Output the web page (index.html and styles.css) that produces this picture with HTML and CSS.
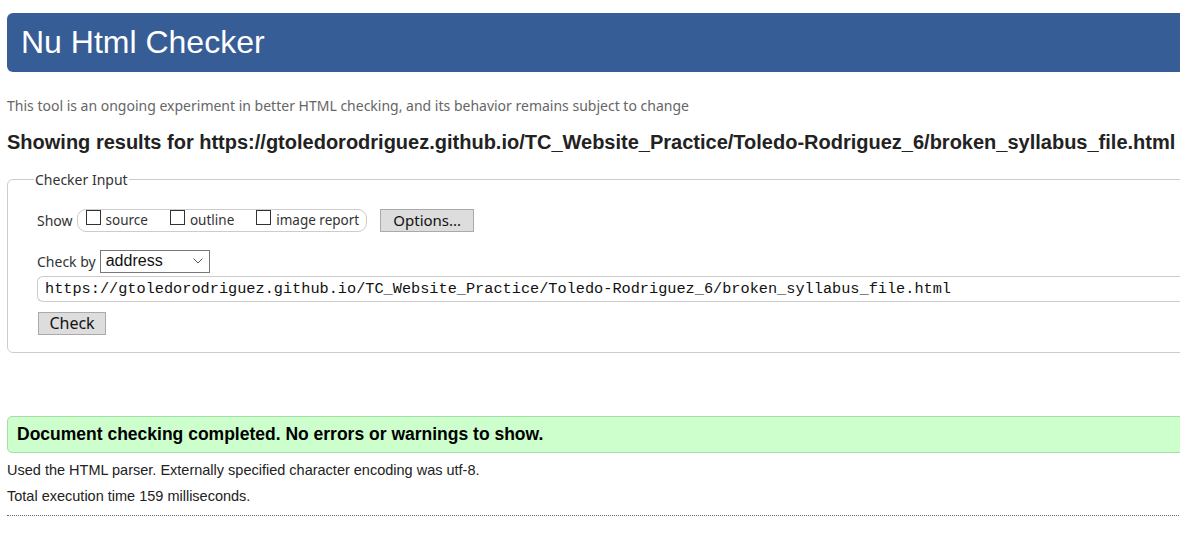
FILE: index.html
```html
<!DOCTYPE html>
<html lang="en">
<head>
<meta charset="utf-8">
<title>Nu Html Checker</title>
<link rel="stylesheet" href="styles.css">
</head>
<body>
<div class="page">
  <h1 class="banner">Nu Html Checker</h1>
  <p class="tagline">This tool is an ongoing experiment in better HTML checking, and its behavior remains subject to change</p>
  <h2 class="results-title">Showing results for https://gtoledorodriguez.github.io/TC_Website_Practice/Toledo-Rodriguez_6/broken_syllabus_file.html</h2>
  <fieldset class="checker">
    <legend class="legend">Checker Input</legend>
    <div class="row show-row">
      <span class="label">Show</span>
      <span class="pill">
        <label class="opt"><span class="box"></span>source</label>
        <label class="opt"><span class="box"></span>outline</label>
        <label class="opt"><span class="box"></span>image report</label>
      </span>
      <span class="btn options">Options...</span>
    </div>
    <div class="row by-row">
      <span class="label">Check by</span>
      <span class="select">address
        <svg class="chev" width="10" height="6" viewBox="0 0 10 6"><path d="M0.5 0.5 L5 5 L9.5 0.5" fill="none" stroke="#555" stroke-width="1"/></svg>
      </span>
    </div>
    <div class="url">https://gtoledorodriguez.github.io/TC_Website_Practice/Toledo-Rodriguez_6/broken_syllabus_file.html</div>
    <span class="btn check">Check</span>
  </fieldset>
  <div class="success">Document checking completed. No errors or warnings to show.</div>
  <p class="info">Used the HTML parser. Externally specified character encoding was utf-8.</p>
  <p class="info">Total execution time 159 milliseconds.</p>
  <hr class="sep">
</div>
</body>
</html>
```
FILE: styles.css
```css
html { overflow: hidden; }
body { margin: 0; background: #fff; font-family: "Liberation Sans", Arial, sans-serif; color: #222; }
.page { width: 1220px; padding: 13px 0 0 7px; }
.banner {
  margin: 0;
  height: 59px;
  box-sizing: border-box;
  background: #365d96;
  color: #fff;
  border-radius: 6px;
  font-weight: normal;
  font-size: 32px;
  line-height: 59px;
  padding-left: 14px;
}
.tagline {
  margin: 24px 0 0;
  font-family: "Noto Sans", sans-serif;
  font-size: 14px;
  color: #666;
  line-height: 20px;
}
.results-title {
  margin: 14px 0 0;
  font-size: 20px;
  line-height: 24px;
  font-weight: bold;
  white-space: nowrap;
}
.checker {
  margin: 16px 0 0;
  padding: 8px 0 17px 29px;
  border: 1px solid #ccc;
  border-radius: 6px;
  font-family: "Noto Sans", sans-serif;
  font-size: 14px;
  color: #333;
}
.legend { padding: 0 1px; margin-left: -3px; font-size: 14px; }
.row { display: flex; align-items: center; }
.show-row { margin-top: 11px; height: 24px; }
.label { margin-right: 4px; }
.pill {
  display: flex;
  align-items: center;
  border: 1px solid #ccc;
  border-radius: 9px;
  height: 23px;
  box-sizing: border-box;
  padding: 0 7px 0 8px;
  gap: 22px;
  font-size: 13.5px;
}
.opt { display: flex; align-items: center; gap: 5px; line-height: 18px; }
.box { width: 15px; height: 15px; border: 1px solid #333; box-sizing: border-box; display: inline-block; margin-top: -5px; }
.btn {
  display: inline-block;
  background: #ddd;
  border: 1px solid #aaa;
  font-family: "Noto Sans", sans-serif;
  font-size: 15px;
  color: #111;
  box-sizing: border-box;
  text-align: center;
  line-height: 20px;
}
.options { margin-left: 13px; width: 94px; height: 23px; }
.by-row { margin-top: 17px; height: 24px; }
.select {
  display: flex;
  align-items: center;
  justify-content: space-between;
  width: 110px;
  height: 23px;
  box-sizing: border-box;
  border: 1px solid #777;
  padding: 0 6px 0 5px;
  font-family: "Liberation Sans", Arial, sans-serif;
  font-size: 16px;
  color: #111;
}
.url {
  margin-top: 3px;
  height: 26px;
  box-sizing: border-box;
  border: 1px solid #ccc;
  border-right: none;
  border-radius: 6px 0 0 6px;
  padding-left: 7px;
  font-family: "Liberation Mono", monospace;
  font-size: 15.25px;
  line-height: 24px;
  color: #111;
  white-space: nowrap;
}
.check { margin-top: 10px; margin-left: 1px; width: 68px; height: 23px; font-size: 16px; }
.success {
  margin-top: 63px;
  height: 37px;
  box-sizing: border-box;
  background: #ccffcc;
  border: 1px solid #a8dca8;
  border-radius: 5px;
  padding-left: 9px;
  font-size: 17.5px;
  font-weight: bold;
  line-height: 35px;
  color: #000;
}
.info { margin: 9px 0 0; font-size: 14.5px; line-height: 17px; color: #222; }
.info + .info { margin-top: 9px; }
.sep { margin: 10px 0 0; border: none; border-top: 1px dotted #666; height: 0; }
```
